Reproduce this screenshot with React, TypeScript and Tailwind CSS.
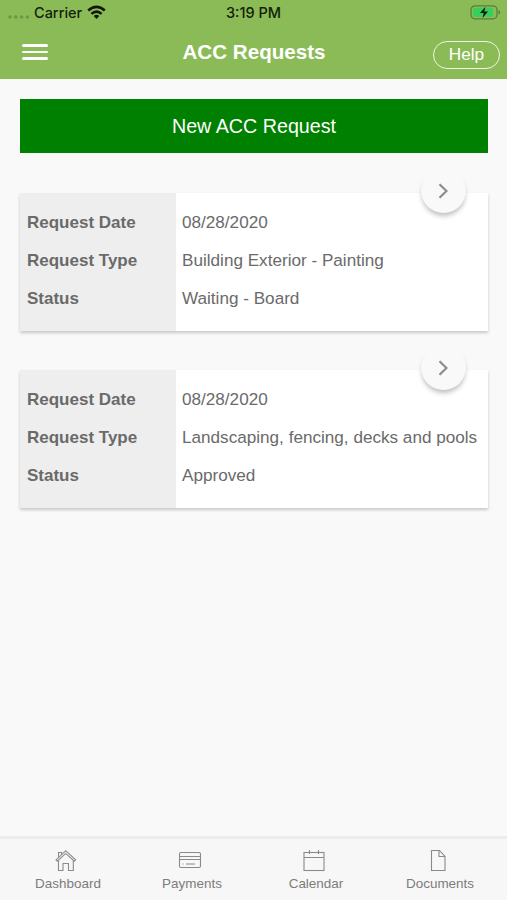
import type { ReactNode } from 'react';

type AccRequest = {
  id: number;
  date: string;
  type: string;
  status: string;
};

const requests: AccRequest[] = [
  { id: 1, date: '08/28/2020', type: 'Building Exterior - Painting', status: 'Waiting - Board' },
  { id: 2, date: '08/28/2020', type: 'Landscaping, fencing, decks and pools', status: 'Approved' },
];

function StatusBar() {
  return (
    <div className="grid grid-cols-3 items-center h-[25px] pl-2 pr-[6px] font-['Inter','Roboto',sans-serif] text-[14.5px] font-medium text-[#14210a]">
      <div className="flex items-center">
        <svg width="22" height="8" viewBox="0 0 22 8" fill="#6f9446" className="mr-1 mt-2">
          <circle cx="2" cy="4" r="1.7" />
          <circle cx="7.8" cy="4" r="1.7" />
          <circle cx="13.6" cy="4" r="1.7" />
          <circle cx="19.4" cy="4" r="1.7" />
        </svg>
        <span>Carrier</span>
        <svg width="19" height="15" viewBox="0 0 19 15" className="ml-[5px]" fill="none" stroke="#10180a" strokeWidth="2.6">
          <path d="M1.2 5.4 Q9.5 -1.8 17.8 5.4" />
          <path d="M4.4 8.9 Q9.5 4.4 14.6 8.9" />
          <path d="M6.7 11.1 Q9.5 8.6 12.3 11.1 L9.5 14Z" fill="#10180a" stroke="none" />
        </svg>
      </div>
      <span className="-ml-[2px] text-center">3:19 PM</span>
      <svg width="31" height="15" viewBox="0 0 31 15" className="justify-self-end">
        <rect x="1" y="0.8" width="26" height="13" rx="4" fill="none" stroke="#5c7d3a" strokeWidth="1.3" />
        <rect x="3" y="2.8" width="20" height="9" rx="2" fill="#35d05c" />
        <path d="M28.5 5v4.6c1.3-.5 1.7-1.3 1.7-2.3s-.4-1.8-1.7-2.3z" fill="#5c7d3a" />
        <path d="M15.5 1.8 10 8h3.7l-1.2 5L18 6.6h-3.7z" fill="#10180a" />
      </svg>
    </div>
  );
}

function Header() {
  return (
    <header className="h-[79px] shrink-0 bg-[#8bbb56]">
      <StatusBar />
      <div className="grid grid-cols-[80px_1fr_80px] items-center h-[54px] pr-[7px] pl-[8px] text-white">
        <button aria-label="Menu" className="ml-[14px] flex w-[26px] flex-col gap-[4px]">
          <span className="h-[2.5px] rounded-full bg-white" />
          <span className="h-[2.5px] rounded-full bg-white" />
          <span className="h-[2.5px] rounded-full bg-white" />
        </button>
        <h1 className="mt-px text-center text-[20.6px] font-bold">ACC Requests</h1>
        <button className="mt-[5px] h-[28px] w-[67px] justify-self-end rounded-full border-[1.5px] border-[#eef6e4] text-[17.2px] leading-none">
          Help
        </button>
      </div>
    </header>
  );
}

function RequestCard({ request }: { request: AccRequest }) {
  return (
    <article className="relative flex h-[138px] bg-white text-[17.14px] leading-[38px] text-[#6a6a6a] shadow-[0_2px_3px_rgba(0,0,0,0.2)]">
      <div className="w-[156px] bg-[#eeeeee] pl-[7px] pt-[11px] text-[17px] font-bold">
        <p>Request Date</p>
        <p>Request Type</p>
        <p>Status</p>
      </div>
      <div className="flex-1 whitespace-nowrap pl-[6px] pt-[10px]">
        <p>{request.date}</p>
        <p>{request.type}</p>
        <p>{request.status}</p>
      </div>

      {/* Details button hanging over the card's top edge */}
      <button
        aria-label="Open request"
        className="absolute -top-[25px] right-[22px] flex size-[45px] items-center justify-center rounded-full bg-[#f9f9f9] pr-[2px] shadow-[0_4px_5px_-1px_rgba(0,0,0,0.26)]"
      >
        <svg width="10" height="16" viewBox="0 0 10 16" fill="none" stroke="#8c8c8c" strokeWidth="2.2">
          <path d="M1.5 1.2 8.5 8l-7 6.8" />
        </svg>
      </button>
    </article>
  );
}

function Tab({ label, children }: { label: string; children: ReactNode }) {
  return (
    <button className="flex flex-1 flex-col items-center">
      <svg width="24" height="24" viewBox="0 0 24 24" fill="none" stroke="#8a8a8a" strokeWidth="1.1" className="mr-[4px]">
        {children}
      </svg>
      <span className="mt-[4px] text-[13.47px] leading-[16px] text-[#7c7c7c]">{label}</span>
    </button>
  );
}

function TabBar() {
  return (
    <nav className="flex h-[64px] shrink-0 border-t-[3px] border-[#ececec] bg-[#f7f7f7] pl-[6px] pr-[5px] pt-[9px]">
      <Tab label="Dashboard">
        <path d="M2 11.8 11.8 2.7l9.8 9.1-1.3 1.4-8.5-7.8-8.5 7.8z" />
        <path d="M4.5 12.6V22.5H9v-7h5.5v7h4.8v-9.9" />
        <path d="M4.5 9.3V4.5h3v2" />
      </Tab>
      <Tab label="Payments">
        <rect x="1.5" y="4.5" width="21" height="15" rx="1.5" />
        <path d="M1.5 8.5h21M1.5 11.5h21M8 16h9M4.5 16h1" />
      </Tab>
      <Tab label="Calendar">
        <rect x="2" y="4.5" width="20" height="18" />
        <path d="M2 9.5h20M7.5 2v4M16.5 2v4" />
      </Tab>
      <Tab label="Documents">
        <path d="M5.5 2.5h8l5.5 6v14H5.5z" />
        <path d="M13 2.5v6h6" />
      </Tab>
    </nav>
  );
}

export default function App() {
  return (
    <div className="flex h-[900px] w-[507px] flex-col overflow-hidden bg-[#f9f9f9] font-['Liberation_Sans',Arial,sans-serif]">
      <Header />
      <main className="flex-1 pl-[20px] pr-[19px] pt-[20px]">
        <button className="block h-[54px] w-full bg-[#008000] pt-[2px] text-[19.7px] text-white">New ACC Request</button>
        <div className="mt-[40px] flex flex-col gap-[39px]">
          {requests.map((r) => (
            <RequestCard key={r.id} request={r} />
          ))}
        </div>
      </main>
      <TabBar />
    </div>
  );
}
